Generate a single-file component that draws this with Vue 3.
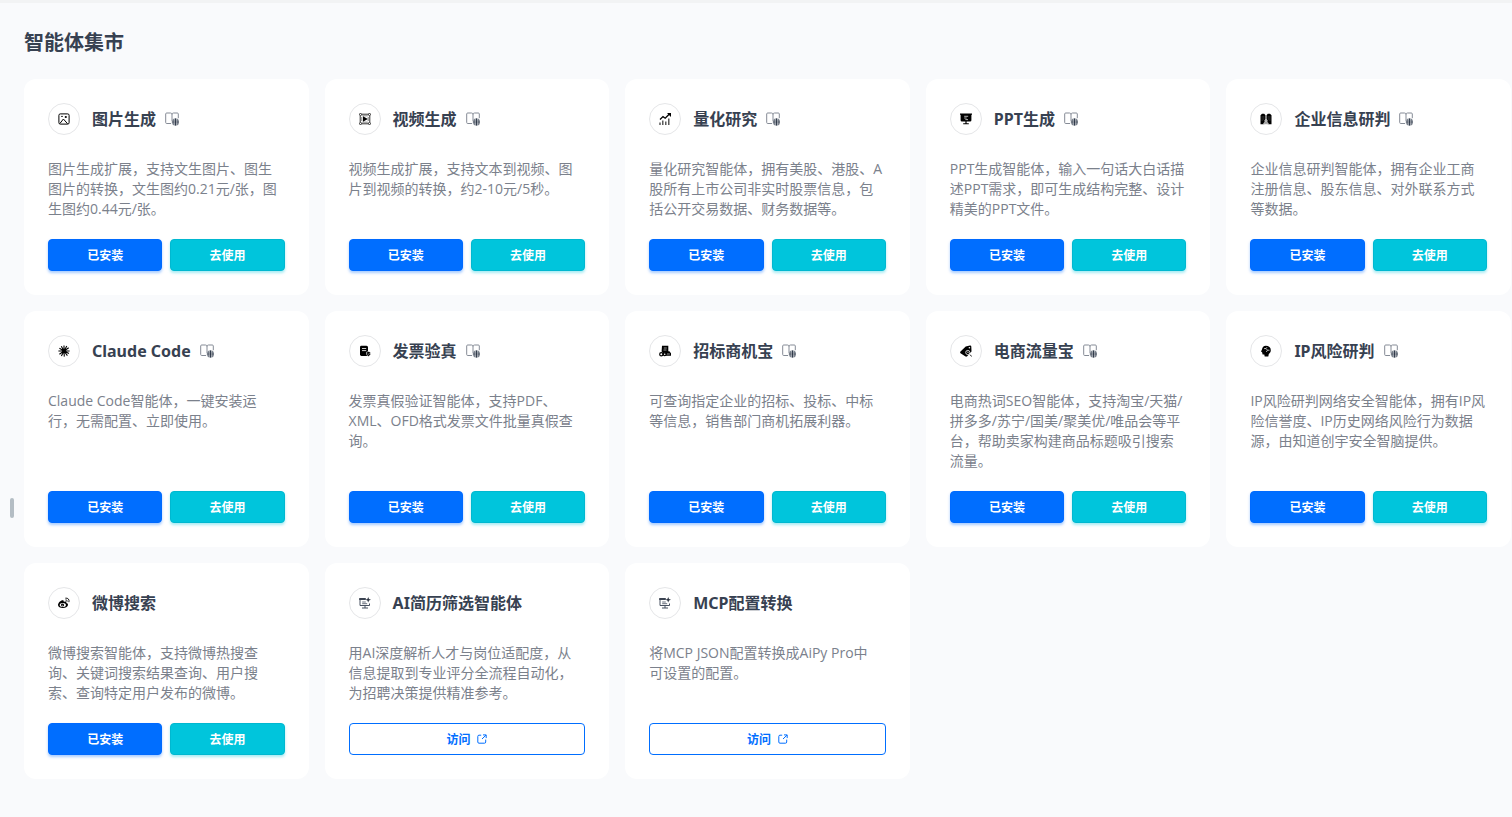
<template>
  <main class="market">
    <span class="resize-handle"></span>

    <!-- 图标集合 -->
    <svg class="icon-defs" aria-hidden="true">
      <symbol id="i-image" viewBox="0 0 12 12">
        <rect x="0.9" y="0.9" width="10.2" height="10.2" rx="1.4" fill="none" stroke="currentColor" />
        <circle cx="7.8" cy="4" r="1.1" fill="currentColor" />
        <path d="M1.8 10.6 5.4 6l4.2 4.8M3.2 3.4h1.6" fill="none" stroke="currentColor" />
      </symbol>
      <symbol id="i-video" viewBox="0 0 12 12">
        <path d="M2.5 1.2h7M2.5 10.8h7M1.2 3v6M10.8 3v6" fill="none" stroke="currentColor" stroke-width="0.8" />
        <path d="M3.2 2.800h5.600M3.200 9.200h5.600M2.800 4v4M9.200 4v4" fill="none" stroke="currentColor" stroke-width="0.500" />
        <g fill="#fff" stroke="currentColor" stroke-width="0.8">
          <circle cx="1.5" cy="1.5" r="1.1" /><circle cx="10.5" cy="1.5" r="1.1" />
          <circle cx="1.5" cy="10.5" r="1.1" /><circle cx="10.5" cy="10.5" r="1.1" />
        </g>
        <path d="M4 3.2 8.800 6 4 8.800z" fill="currentColor" />
      </symbol>
      <symbol id="i-chart" viewBox="0 0 12 12">
        <path d="M1 6.4 4 3.6l2.2 1.6L10.4 1" fill="none" stroke="currentColor" stroke-width="1.3" />
        <path d="M8 0h4v4z" fill="currentColor" />
        <path d="M1 9.5V12M3.8 7.5V12M6.8 8.4V12M9.8 5.6V12" stroke="currentColor" stroke-width="1.3" opacity="0.75" />
      </symbol>
      <symbol id="i-ppt" viewBox="0 0 12 12">
        <path d="M0 .6h12v1.2h-.6v5.4q0 1.3-1.3 1.3H6.6v1.7h2.2v1.1H3.2v-1.1h2.2V8.500H1.900Q.6 8.500.6 7.200V1.800H0z" fill="currentColor" />
        <path d="M4.200 3.300h4M4.200 5h2.500M5.400 6.600h2.600" stroke="#fff" stroke-width="0.700" />
      </symbol>
      <symbol id="i-company" viewBox="0 0 12 12">
        <path d="M.5 2.200 2 .8h2.200l1.300 1.400v6.300L4.300 11.200H.5zM6.500 2.200 7.800.8H10l1.500 1.400v9H7.700L6.500 8.500z" fill="currentColor" />
        <path d="M2.100 3v5M3.800 3v4M8.200 3v4M9.900 3v5" stroke="#fff" stroke-width="0.3" opacity="0.6" />
        <path d="M3.600 11.200c.2-1.800 1-2 1.700-2.300a1.300 1.300 0 1 1 1.400 0c.8.300 1.500.6 1.700 2.300z" fill="#999" stroke="#fff" stroke-width="0.5" />
      </symbol>
      <symbol id="i-claude" viewBox="0 0 12 12">
        <path
          d="M6 6V.4M6 6l2.800-4.900M6 6l4.700-3.200M6 6h5.600M6 6l4.900 2.500M6 6l3.400 4.600M6 6l.3 5.600M6 6l-2.600 4.900M6 6l-4.600 3.200M6 6H.4M6 6 1.400 3.300M6 6 3.300 1.300"
          stroke="currentColor"
          stroke-width="1.100"
        />
      </symbol>
      <symbol id="i-invoice" viewBox="0 0 12 12">
        <path d="M2.200.8h5.300q1.500 0 1.500 1.500V11H2.400Q1 11 1 9.600V2.200Q1 .8 2.200.8z" fill="currentColor" />
        <path d="M3 3.500h4.200M3 5.600h4.200" stroke="#fff" stroke-width="0.8" />
        <path d="M7.500 7.200 9.500 6.400l2 .8v2q-.4 1.500-2 2.200-1.700-.7-2-2.200z" fill="currentColor" stroke="#fff" stroke-width="0.6" />
        <path d="m8.500 8.700.8.8 1.300-1.500" fill="none" stroke="#fff" stroke-width="0.5" />
      </symbol>
      <symbol id="i-bid" viewBox="0 0 12 12">
        <path d="M3 .8h6.300v5.500h1.100L12 8.200v2.600H4.800V9L2.600 6.500z" fill="currentColor" />
        <path d="M4.800 3h3M4.500 5h3" stroke="#fff" stroke-width="0.600" />
        <g fill="#fff" stroke="currentColor" stroke-width="1.200">
          <circle cx="2.300" cy="9.200" r="1.600" /><circle cx="5.700" cy="9.200" r="1.400" />
        </g>
        <path d="M8 9h2.800" stroke="#fff" stroke-width="0.600" />
      </symbol>
      <symbol id="i-tag" viewBox="0 0 12 12">
        <path d="M5.700 1.600 10 .4q1.200-.1 1.300 1l.2 5-4.300 4.800q-1 .8-2 .1L.5 8.200q-.8-.8 0-1.800z" fill="currentColor" />
        <circle cx="9.400" cy="2.700" r="0.8" fill="#fff" />
        <circle cx="7.800" cy="7.500" r="2.100" fill="currentColor" stroke="#fff" stroke-width="0.8" />
        <path d="m9.300 9 2 2.300M6.900 7.800l1-.9.800.6" fill="none" stroke="#fff" stroke-width="0.700" />
        <path d="m10 9.600 1.800 2" stroke="currentColor" stroke-width="0.9" />
      </symbol>
      <symbol id="i-risk" viewBox="0 0 12 12">
        <path d="M5.800.8c3 0 5 1.700 5 4.500 0 1.900-1 2.700-2 3.600L8.300 11.400H4.700L4.300 9.500H2.600L2.100 7.200 1 6.600l1-2C2.200 2.300 3.700.8 5.800.8z" fill="currentColor" />
        <path d="M4 3.600h2l1-1.400M6 3.600l1.500 1.600h2M7.500 5.200 6.300 7" fill="none" stroke="#fff" stroke-width="0.700" />
      </symbol>
      <symbol id="i-weibo" viewBox="0 0 12 12">
        <path
          d="M4.900 3.200C3 3 0 5.800 0 8c0 1.900 2.300 3 4.800 3 3.200 0 5.200-1.800 5.200-3.300 0-1-.8-1.500-1.700-1.700.4-1.100-.4-1.900-2.500-1 .3-1-.1-1.700-.9-1.800z"
          fill="currentColor"
        />
        <ellipse cx="4.800" cy="7.900" rx="3.100" ry="2" fill="#fff" />
        <circle cx="4.500" cy="8" r="1.600" fill="currentColor" />
        <circle cx="4.200" cy="8.300" r="0.500" fill="#fff" />
        <path d="M7.700 1.100c2.400-.4 3.900 1.500 3.300 3.700M7.800 2.900c1-.1 1.600.6 1.300 1.500" fill="none" stroke="currentColor" stroke-width="0.900" stroke-linecap="round" />
      </symbol>
      <symbol id="i-screen" viewBox="0 0 12 12">
        <path d="M1 2v6.500h9.500V6.500M3 11h6M6 8.500V11" fill="none" stroke="#475060" />
        <path d="M.2 1h6.600v2H.2z" fill="#3c4452" />
        <path d="M3.200 5h3.600M3.200 6.700h5" stroke="#69717e" />
        <path d="m9.200 0 .8 2 2 .8-2 .8-.8 2-.8-2-2-.8 2-.8z" fill="#2e3644" />
      </symbol>
      <symbol id="i-book" viewBox="0 0 14 14">
        <path
          d="M7 2.300Q6.700 1 5.500 1H1.700Q.7 1 .7 2v8.500q0 1 1 1h4.400M7 2.300Q7.300 1 8.500 1h3.800q1 0 1 1v4.200M7 2.100v7"
          fill="none"
          stroke="#858b96"
        />
        <circle cx="10.500" cy="10" r="3.400" fill="#fff" stroke="#59616f" stroke-width="0.500" />
        <path d="M7 10h7M10.500 6.500v7" fill="none" stroke="#2f3848" />
        <path d="M9 6.900q-1 3.100 0 6.200M12 6.900q1 3.100 0 6.200M7.600 8.300h5.800M7.600 11.800h5.800" fill="none" stroke="#424b5c" stroke-width="0.600" />
      </symbol>
      <symbol id="i-open" viewBox="0 0 10 10">
        <path d="M4.200 1.200H2q-1.200 0-1.200 1.200V8q0 1.200 1.200 1.200h5.500q1.200 0 1.200-1.200V5.600M6 .9h3.200v3.200M9 1.100 5 5" fill="none" stroke="currentColor" />
      </symbol>
    </svg>

    <h1 class="title">智能体集市</h1>

    <section class="card-grid">
      <article v-for="item in agents" :key="item.name" class="card">
        <header class="card-head">
          <span class="avatar">
            <svg class="avatar-icon"><use :href="'#i-' + item.icon" /></svg>
          </span>
          <h2 class="name">{{ item.name }}</h2>
          <a v-if="item.doc" class="doc" href="#" :aria-label="item.name">
            <svg class="doc-icon"><use href="#i-book" /></svg>
          </a>
        </header>
        <p class="desc">{{ item.desc }}</p>
        <footer class="actions">
          <a v-if="item.link" class="btn btn-plain" href="#">
            访问
            <svg class="open-icon"><use href="#i-open" /></svg>
          </a>
          <template v-else>
            <button type="button" class="btn btn-primary">已安装</button>
            <button type="button" class="btn btn-use">去使用</button>
          </template>
        </footer>
      </article>
    </section>
  </main>
</template>

<script setup>
// doc: 是否有说明文档  link: 外部链接类智能体
const agents = [
  { name: "图片生成", icon: "image", doc: true, desc: "图片生成扩展，支持文生图片、图生图片的转换，文生图约0.21元/张，图生图约0.44元/张。" },
  { name: "视频生成", icon: "video", doc: true, desc: "视频生成扩展，支持文本到视频、图片到视频的转换，约2-10元/5秒。" },
  { name: "量化研究", icon: "chart", doc: true, desc: "量化研究智能体，拥有美股、港股、A股所有上市公司非实时股票信息，包括公开交易数据、财务数据等。" },
  { name: "PPT生成", icon: "ppt", doc: true, desc: "PPT生成智能体，输入一句话大白话描述PPT需求，即可生成结构完整、设计精美的PPT文件。" },
  { name: "企业信息研判", icon: "company", doc: true, desc: "企业信息研判智能体，拥有企业工商注册信息、股东信息、对外联系方式等数据。" },
  { name: "Claude Code", icon: "claude", doc: true, desc: "Claude Code智能体，一键安装运\n行，无需配置、立即使用。" },
  { name: "发票验真", icon: "invoice", doc: true, desc: "发票真假验证智能体，支持PDF、XML、OFD格式发票文件批量真假查询。" },
  { name: "招标商机宝", icon: "bid", doc: true, desc: "可查询指定企业的招标、投标、中标等信息，销售部门商机拓展利器。" },
  { name: "电商流量宝", icon: "tag", doc: true, desc: "电商热词SEO智能体，支持淘宝/天猫/拼多多/苏宁/国美/聚美优/唯品会等平台，帮助卖家构建商品标题吸引搜索流量。" },
  { name: "IP风险研判", icon: "risk", doc: true, desc: "IP风险研判网络安全智能体，拥有IP风险信誉度、IP历史网络风险行为数据源，由知道创宇安全智脑提供。" },
  { name: "微博搜索", icon: "weibo", desc: "微博搜索智能体，支持微博热搜查询、关键词搜索结果查询、用户搜索、查询特定用户发布的微博。" },
  { name: "AI简历筛选智能体", icon: "screen", link: true, desc: "用AI深度解析人才与岗位适配度，从信息提取到专业评分全流程自动化，为招聘决策提供精准参考。" },
  { name: "MCP配置转换", icon: "screen", link: true, desc: "将MCP JSON配置转换成AiPy Pro中\n可设置的配置。" },
];
</script>

<style>
body {
  background: #f9fafc;
}
</style>

<style scoped>
.market {
  position: relative;
  box-sizing: border-box;
  min-height: 100vh;
  padding: 24px 1px 24px 24px;
  border-top: 3px solid #f2f3f4;
  background: #f9fafc;
  color: #374151;
  font-family: "Noto Sans", "Noto Sans CJK SC", sans-serif;
}

.icon-defs {
  position: absolute;
  width: 0;
  height: 0;
}

/* 左侧拖拽条 */
.resize-handle {
  position: absolute;
  top: 495px;
  left: 10px;
  width: 4px;
  height: 20px;
  border-radius: 2px;
  background: #b4bdc4;
}

.title {
  margin: 0 0 20px;
  font-size: 20px;
  line-height: 32px;
  font-weight: 700;
}

.card-grid {
  display: grid;
  grid-template-columns: repeat(auto-fill, minmax(280px, 1fr));
  gap: 16px;
}

.card {
  display: flex;
  flex-direction: column;
  padding: 24px;
  border-radius: 12px;
  background: #fff;
}

.card-head {
  display: flex;
  align-items: center;
  height: 32px;
  margin-bottom: 24px;
}

.avatar {
  display: flex;
  align-items: center;
  justify-content: center;
  box-sizing: border-box;
  width: 32px;
  height: 32px;
  margin-right: 12px;
  border: 1px solid #e5e6e8;
  border-radius: 50%;
  color: #000;
}

.avatar-icon {
  width: 12px;
  height: 12px;
}

.name {
  margin: 0;
  font-size: 16px;
  line-height: 24px;
  font-weight: 700;
}

.doc {
  display: flex;
  margin-left: 9px;
}

.doc-icon {
  width: 14px;
  height: 14px;
}

.desc {
  min-height: 60px;
  margin: 0 0 20px;
  color: #7b818c;
  font-family: "Open Sans", "Noto Sans CJK SC", sans-serif;
  font-size: 14px;
  line-height: 20px;
  white-space: pre-line;
}

.actions {
  display: flex;
  gap: 8px;
  margin-top: auto;
}

.btn {
  display: flex;
  flex: 1;
  align-items: center;
  justify-content: center;
  gap: 7px;
  box-sizing: border-box;
  height: 32px;
  padding: 0;
  border: 1px solid transparent;
  border-radius: 4px;
  font-family: inherit;
  font-size: 12px;
  font-weight: 700;
  text-decoration: none;
  cursor: pointer;
}

.btn-primary {
  border-color: #006aff;
  background: #006eff;
  color: #fff;
  box-shadow: 0 2px 3px rgba(0, 110, 255, 0.35);
}

.btn-use {
  border-color: #00b8d0;
  background: #00c5dc;
  color: #fff;
  box-shadow: 0 2px 3px rgba(0, 197, 220, 0.35);
}

.btn-plain {
  border-color: #006eff;
  background: #fff;
  color: #006eff;
}

.open-icon {
  width: 10px;
  height: 10px;
}
</style>
